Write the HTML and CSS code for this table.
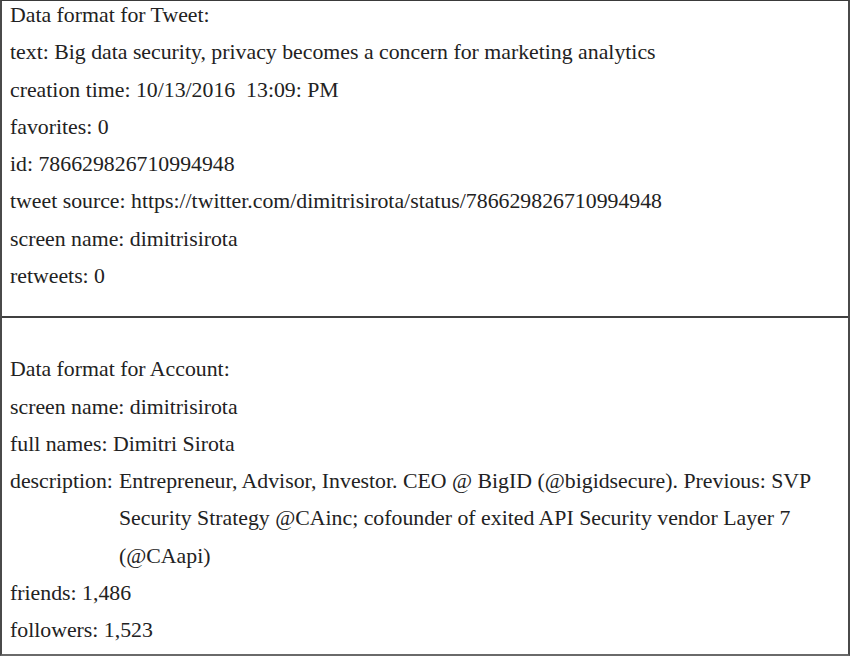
FILE: index.html
```html
<!DOCTYPE html>
<html>
<head>
<meta charset="utf-8">
<link rel="stylesheet" href="styles.css">
</head>
<body>
<div class="table">
  <div class="cell cell-tweet">
    <div class="lines">
      <div class="line">Data format for Tweet:</div>
      <div class="line">text: Big data security, privacy becomes a concern for marketing analytics</div>
      <div class="line">creation time: 10/13/2016&nbsp; 13:09: PM</div>
      <div class="line">favorites: 0</div>
      <div class="line">id: 786629826710994948</div>
      <div class="line">tweet source: https://twitter.com/dimitrisirota/status/786629826710994948</div>
      <div class="line">screen name: dimitrisirota</div>
      <div class="line">retweets: 0</div>
    </div>
  </div>
  <div class="cell cell-account">
    <div class="lines">
      <div class="line">&nbsp;</div>
      <div class="line">Data format for Account:</div>
      <div class="line">screen name: dimitrisirota</div>
      <div class="line">full names: Dimitri Sirota</div>
      <div class="row">
        <div class="label">description:</div>
        <div class="value">Entrepreneur, Advisor, Investor. CEO @ BigID (@bigidsecure). Previous: SVP Security Strategy @CAinc; cofounder of exited API Security vendor Layer 7 (@CAapi)</div>
      </div>
      <div class="line">friends: 1,486</div>
      <div class="line">followers: 1,523</div>
    </div>
  </div>
</div>
</body>
</html>
```

FILE: styles.css
```css
html, body {
  margin: 0;
  padding: 0;
  background: #ffffff;
}
.table {
  width: 850px;
  height: 656px;
  box-sizing: border-box;
  border-top: 1px solid #3a3a3a;
  border-left: 2px solid #4a4a4a;
  border-right: 2px solid #4a4a4a;
  border-bottom: 2px solid #6a6a6a;
  display: flex;
  flex-direction: column;
  font-family: "Liberation Serif", "Times New Roman", serif;
  font-size: 21.8px;
  line-height: 37.3px;
  color: #222222;
}
.cell {
  padding: 0 8px;
}
.cell-tweet {
  height: 317px;
  box-sizing: border-box;
  border-bottom: 2px solid #404040;
}
.cell-account {
  flex: 1;
}
.lines {
  margin-top: -4px;
}
.line {
  white-space: nowrap;
}
.row {
  display: flex;
}
.label {
  flex: none;
  width: 109px;
}
.value {
  flex: 1;
}
```
